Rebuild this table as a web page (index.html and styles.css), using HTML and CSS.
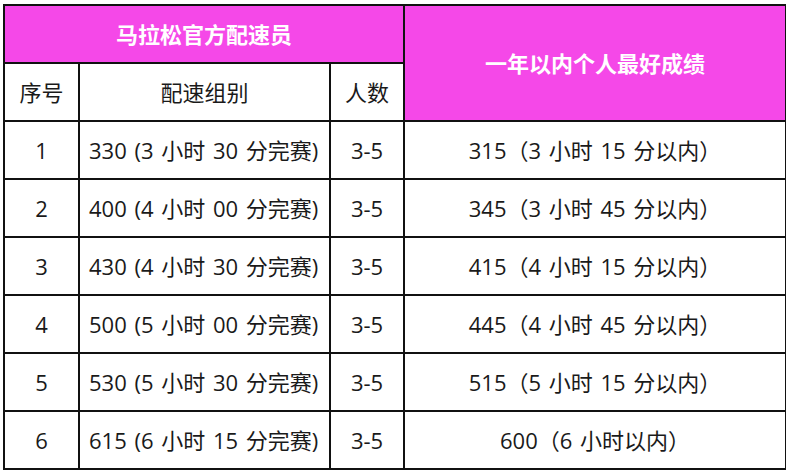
FILE: index.html
```html
<!DOCTYPE html>
<html lang="zh-CN">
<head>
<meta charset="utf-8">
<link rel="stylesheet" href="styles.css">
</head>
<body>
<table class="pace">
  <colgroup>
    <col class="c-no">
    <col class="c-group">
    <col class="c-count">
    <col class="c-best">
  </colgroup>
  <thead>
    <tr class="h1">
      <th colspan="3" class="hl">马拉松官方配速员</th>
      <th rowspan="2" class="hl">一年以内个人最好成绩</th>
    </tr>
    <tr class="h2">
      <th>序号</th>
      <th>配速组别</th>
      <th>人数</th>
    </tr>
  </thead>
  <tbody>
    <tr><td>1</td><td class="grp">330 (3 小时 30 分完赛)</td><td>3-5</td><td>315（3 小时 15 分以内）</td></tr>
    <tr><td>2</td><td class="grp">400 (4 小时 00 分完赛)</td><td>3-5</td><td>345（3 小时 45 分以内）</td></tr>
    <tr><td>3</td><td class="grp">430 (4 小时 30 分完赛)</td><td>3-5</td><td>415（4 小时 15 分以内）</td></tr>
    <tr><td>4</td><td class="grp">500 (5 小时 00 分完赛)</td><td>3-5</td><td>445（4 小时 45 分以内）</td></tr>
    <tr><td>5</td><td class="grp">530 (5 小时 30 分完赛)</td><td>3-5</td><td>515（5 小时 15 分以内）</td></tr>
    <tr><td>6</td><td class="grp">615 (6 小时 15 分完赛)</td><td>3-5</td><td>600（6 小时以内）</td></tr>
  </tbody>
</table>
</body>
</html>
```
FILE: styles.css
```css
html, body {
  margin: 0;
  padding: 0;
  background: #ffffff;
}
body {
  padding: 4px 0 0 3px;
  font-family: "Open Sans", "Noto Sans CJK SC", sans-serif;
  color: #1a1a1a;
}
.pace {
  border-collapse: collapse;
  table-layout: fixed;
  width: 782px;
  font-size: 22px;
}
.c-no { width: 75px; }
.c-group { width: 251px; }
.c-count { width: 74px; }
.c-best { width: 382px; }
.pace th, .pace td {
  border: 2px solid #111;
  padding: 0;
  text-align: center;
  vertical-align: middle;
  height: 56px;
  font-weight: normal;
  line-height: 1;
}
.pace td {
  word-spacing: 2px;
}
.pace th.hl {
  background: #f548e8;
  color: #ffffff;
  font-weight: bold;
  font-size: 22px;
}
.pace td.grp {
  text-align: left;
  padding-left: 9px;
}
```
